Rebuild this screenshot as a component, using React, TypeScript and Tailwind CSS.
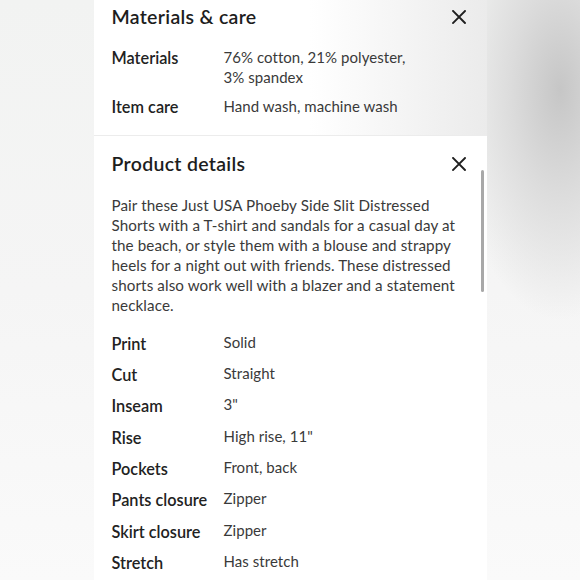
import React from 'react';

const materials = [
  { label: 'Materials', value: ['76% cotton, 21% polyester,', '3% spandex'] },
  { label: 'Item care', value: ['Hand wash, machine wash'] },
];

const details = [
  { label: 'Print', value: 'Solid' },
  { label: 'Cut', value: 'Straight' },
  { label: 'Inseam', value: '3"' },
  { label: 'Rise', value: 'High rise, 11"' },
  { label: 'Pockets', value: 'Front, back' },
  { label: 'Pants closure', value: 'Zipper' },
  { label: 'Skirt closure', value: 'Zipper' },
  { label: 'Stretch', value: 'Has stretch' },
];

const description = [
  'Pair these Just USA Phoeby Side Slit Distressed',
  'Shorts with a T-shirt and sandals for a casual day at',
  'the beach, or style them with a blouse and strappy',
  'heels for a night out with friends. These distressed',
  'shorts also work well with a blazer and a statement',
  'necklace.',
];

function CloseIcon() {
  return (
    <svg viewBox="0 0 14 14" className="h-[14px] w-[14px] shrink-0" fill="none" stroke="#1f1f1f" strokeWidth="1.9" strokeLinecap="square">
      <path d="M1 1l12 12M13 1L1 13" />
    </svg>
  );
}

export default function App() {
  return (
    <div
      className="flex h-[580px] w-full justify-center overflow-hidden bg-[image:radial-gradient(ellipse_110px_230px_at_560px_90px,#c6c6c6_0%,#dcdcdc_45%,rgba(240,240,240,0)_100%),linear-gradient(180deg,#f2f3f2_0%,#f5f5f5_50%,#fafafa_100%)]"
      style={{ fontFamily: 'Lato, "Open Sans", sans-serif' }}
    >
      <div className="relative h-fit w-[393px] shrink-0 bg-white">
        <section className="border-b border-[#ececec] bg-[image:linear-gradient(90deg,#ffffff_55%,#ebebeb_100%)] pb-[19px] pl-[18px] pr-[21px] pt-[5px]">
          <div className="flex items-center justify-between">
            <h2 className="text-[19.5px] font-semibold leading-[24px] tracking-[0.3px] text-[#1d1d1d]">Materials &amp; care</h2>
            <CloseIcon />
          </div>
          <div className="mt-[18px] flex flex-col gap-[8.5px]">
            {materials.map((row) => (
              <div key={row.label} className="flex items-start">
                <div className="w-[112px] shrink-0 pt-[2px] text-[16.3px] font-semibold leading-[18px] text-[#222]">{row.label}</div>
                <div className="text-[15px] leading-[20px] tracking-[0.05px] text-[#3a3a3a]">
                  {row.value.map((line) => (
                    <div key={line}>{line}</div>
                  ))}
                </div>
              </div>
            ))}
          </div>
        </section>

        <section className="pl-[18px] pr-[21px] pt-[16.5px]">
          <div className="flex items-center justify-between">
            <h2 className="text-[19.5px] font-semibold leading-[24px] tracking-[0.3px] text-[#1d1d1d]">Product details</h2>
            <CloseIcon />
          </div>
          <p className="mt-[18.5px] text-[15.2px] leading-[20px] tracking-[0.1px] text-[#3a3a3a]">
            {description.map((line) => (
              <span key={line} className="block whitespace-nowrap">{line}</span>
            ))}
          </p>
          <div className="mt-[18px] flex flex-col gap-[11.4px] pb-6">
            {details.map((row) => (
              <div key={row.label} className="flex items-start">
                <div className="w-[112px] shrink-0 pt-[2px] text-[16.3px] font-semibold leading-[18px] text-[#222]">{row.label}</div>
                <div className="pb-[2px] text-[15px] leading-[18px] tracking-[0.05px] text-[#3a3a3a]">{row.value}</div>
              </div>
            ))}
          </div>
        </section>

        <div className="absolute left-[387px] top-[170px] h-[122px] w-[3px] rounded-full bg-[#a8a8a8]" />
      </div>
    </div>
  );
}
